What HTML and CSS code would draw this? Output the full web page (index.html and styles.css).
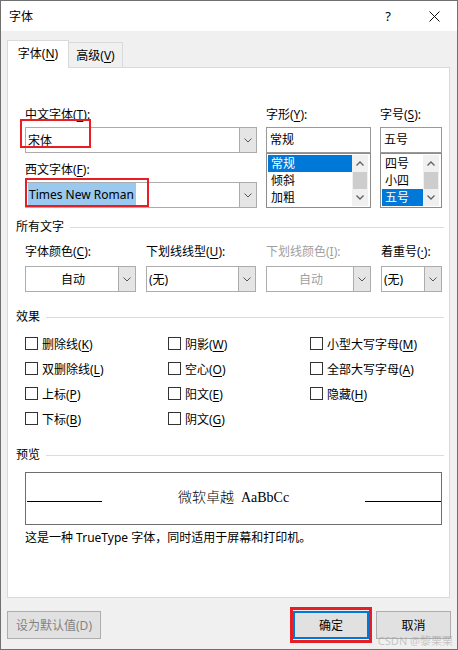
FILE: index.html
```html
<!DOCTYPE html>
<html lang="zh-CN">
<head>
  <meta charset="UTF-8" />
  <meta name="viewport" content="width=device-width, initial-scale=1" />
  <title>字体</title>
  <link rel="stylesheet" href="styles.css">
</head>
<body>
  <div class="dialog">
    <div class="titlebar">
      <span class="title">字体</span>
      <span class="tb-btn help">?</span>
      <span class="tb-btn close">
        <svg width="11" height="11" viewBox="0 0 11 11"><path d="M0.5 0.5L10.5 10.5M10.5 0.5L0.5 10.5" stroke="#111" stroke-width="1" fill="none"/></svg>
      </span>
    </div>

    <div class="dialog-body">
      <div class="tabs">
        <div class="tab active">字体(<u>N</u>)</div>
        <div class="tab">高级(<u>V</u>)</div>
      </div>

      <div class="panel">
        <!-- font / style / size -->
        <div class="font-grid">
          <div class="col">
            <label>中文字体(<u>T</u>):</label>
            <div class="combo gap-top">
              <div class="combo-text">宋体</div>
              <div class="combo-btn"><svg width="8" height="5" viewBox="0 0 8 5"><path d="M0.5 0.5L4 4L7.5 0.5" fill="none" stroke="#555"/></svg></div>
              <div class="mark mark-cn"></div>
            </div>
            <label class="second">西文字体(<u>F</u>):</label>
            <div class="combo gap-top">
              <div class="combo-text"><span class="hl">Times New Roman</span></div>
              <div class="combo-btn"><svg width="8" height="5" viewBox="0 0 8 5"><path d="M0.5 0.5L4 4L7.5 0.5" fill="none" stroke="#555"/></svg></div>
              <div class="mark mark-west"></div>
            </div>
          </div>

          <div class="col">
            <label>字形(<u>Y</u>):</label>
            <div class="textbox gap-top">常规</div>
            <div class="listbox">
              <div class="items">
                <div class="item sel">常规</div>
                <div class="item">倾斜</div>
                <div class="item">加粗</div>
              </div>
              <div class="vscroll">
                <div class="arrow"><svg width="8" height="5" viewBox="0 0 8 5"><path d="M0.5 4.5L4 1L7.5 4.5" fill="none" stroke="#606060" stroke-width="1.3"/></svg></div>
                <div class="thumb"></div>
                <div class="arrow"><svg width="8" height="5" viewBox="0 0 8 5"><path d="M0.5 0.5L4 4L7.5 0.5" fill="none" stroke="#606060" stroke-width="1.3"/></svg></div>
              </div>
            </div>
          </div>

          <div class="col">
            <label>字号(<u>S</u>):</label>
            <div class="textbox gap-top">五号</div>
            <div class="listbox">
              <div class="items">
                <div class="item">四号</div>
                <div class="item">小四</div>
                <div class="item sel">五号</div>
              </div>
              <div class="vscroll">
                <div class="arrow"><svg width="8" height="5" viewBox="0 0 8 5"><path d="M0.5 4.5L4 1L7.5 4.5" fill="none" stroke="#606060" stroke-width="1.3"/></svg></div>
                <div class="thumb"></div>
                <div class="arrow"><svg width="8" height="5" viewBox="0 0 8 5"><path d="M0.5 0.5L4 4L7.5 0.5" fill="none" stroke="#606060" stroke-width="1.3"/></svg></div>
              </div>
            </div>
          </div>
        </div>

        <!-- all text -->
        <div class="group-title sec-all">所有文字</div>
        <div class="attr-grid">
          <label>字体颜色(<u>C</u>):</label>
          <label>下划线线型(<u>U</u>):</label>
          <label class="disabled">下划线颜色(<u>I</u>):</label>
          <label>着重号(<u>·</u>):</label>

          <div class="combo">
            <div class="combo-text center">自动</div>
            <div class="combo-btn"><svg width="8" height="5" viewBox="0 0 8 5"><path d="M0.5 0.5L4 4L7.5 0.5" fill="none" stroke="#555"/></svg></div>
          </div>
          <div class="combo">
            <div class="combo-text">(无)</div>
            <div class="combo-btn"><svg width="8" height="5" viewBox="0 0 8 5"><path d="M0.5 0.5L4 4L7.5 0.5" fill="none" stroke="#555"/></svg></div>
          </div>
          <div class="combo disabled">
            <div class="combo-text center">自动</div>
            <div class="combo-btn"><svg width="8" height="5" viewBox="0 0 8 5"><path d="M0.5 0.5L4 4L7.5 0.5" fill="none" stroke="#555"/></svg></div>
          </div>
          <div class="combo">
            <div class="combo-text">(无)</div>
            <div class="combo-btn"><svg width="8" height="5" viewBox="0 0 8 5"><path d="M0.5 0.5L4 4L7.5 0.5" fill="none" stroke="#555"/></svg></div>
          </div>
        </div>

        <!-- effects -->
        <div class="group-title sec-fx">效果</div>
        <div class="fx-grid">
          <div class="check"><span class="box"></span><span>删除线(<u>K</u>)</span></div>
          <div class="check"><span class="box"></span><span>双删除线(<u>L</u>)</span></div>
          <div class="check"><span class="box"></span><span>上标(<u>P</u>)</span></div>
          <div class="check"><span class="box"></span><span>下标(<u>B</u>)</span></div>
          <div class="check"><span class="box"></span><span>阴影(<u>W</u>)</span></div>
          <div class="check"><span class="box"></span><span>空心(<u>O</u>)</span></div>
          <div class="check"><span class="box"></span><span>阳文(<u>E</u>)</span></div>
          <div class="check"><span class="box"></span><span>阴文(<u>G</u>)</span></div>
          <div class="check"><span class="box"></span><span>小型大写字母(<u>M</u>)</span></div>
          <div class="check"><span class="box"></span><span>全部大写字母(<u>A</u>)</span></div>
          <div class="check"><span class="box"></span><span>隐藏(<u>H</u>)</span></div>
        </div>

        <!-- preview -->
        <div class="group-title sec-preview">预览</div>
        <div class="preview">
          <div class="pline"></div>
          <div class="ptext">微软卓越&nbsp;&nbsp;AaBbCc</div>
          <div class="pline right"></div>
        </div>
        <div class="desc">这是一种 TrueType 字体，同时适用于屏幕和打印机。</div>
      </div>

      <div class="buttons">
        <div class="btn btn-default">设为默认值(D)</div>
        <div class="spacer"></div>
        <div class="btn btn-ok">确定<div class="mark mark-ok"></div></div>
        <div class="btn btn-cancel">取消</div>
      </div>
    </div>

    <div class="watermark">CSDN @黎栗栗</div>
  </div>
</body>
</html>
```

FILE: styles.css
```css
* {
  box-sizing: border-box;
}
html, body {
  margin: 0;
  padding: 0;
}
body {
  font-family: "Noto Sans", "Noto Sans CJK SC", sans-serif;
  font-size: 12px;
  color: #000;
  width: 458px;
  height: 650px;
}
u {
  text-decoration-thickness: 1px;
  text-underline-offset: 2px;
}
.dialog {
  width: 458px;
  height: 650px;
  border: 1px solid #707070;
  background-color: #f0f0f0;
  display: flex;
  flex-direction: column;
  position: relative;
}
.titlebar {
  height: 30px;
  flex-shrink: 0;
  background-color: #fff;
  display: flex;
  align-items: center;
}
.title {
  flex: 1;
  padding-left: 8px;
}
.tb-btn {
  width: 46px;
  height: 30px;
  display: flex;
  align-items: center;
  justify-content: center;
}
.help {
  font-size: 13px;
}
.dialog-body {
  flex: 1;
  padding: 9px 6px 0 6px;
  display: flex;
  flex-direction: column;
}

/* tabs */
.tabs {
  display: flex;
  align-items: flex-end;
  height: 27px;
}
.tab {
  height: 25px;
  width: 55px;
  margin-left: -1px;
  padding-top: 5px;
  line-height: 16px;
  text-align: center;
  border: 1px solid #d9d9d9;
  border-bottom: none;
  background-color: #f0f0f0;
}
.tab.active {
  width: 62px;
  height: 28px;
  margin-left: 0;
  margin-bottom: -1px;
  background-color: #fff;
  position: relative;
  z-index: 1;
}
.panel {
  height: 531px;
  flex-shrink: 0;
  margin-right: 1px;
  background-color: #fff;
  border: 1px solid #d9d9d9;
  padding: 39px 5px 0 8px;
}

label {
  display: block;
  height: 16px;
  line-height: 16px;
  white-space: nowrap;
}
label.disabled {
  color: #a0a0a0;
}

/* font / style / size */
.font-grid {
  display: grid;
  grid-template-columns: 232px 105px 62px;
  column-gap: 9px;
  margin-left: 9px;
}
.gap-top {
  margin-top: 4px;
}
label.second {
  margin-top: 9px;
}
.combo {
  height: 26px;
  display: flex;
  border: 1px solid #acacac;
  background-color: #fff;
  position: relative;
}
.combo-text {
  flex: 1;
  padding-left: 2px;
  display: flex;
  align-items: center;
  white-space: nowrap;
}
.combo-text.center {
  justify-content: center;
}
.combo.disabled .combo-text {
  color: #a0a0a0;
}
.combo-btn {
  width: 17px;
  background-color: #e5e5e5;
  border-left: 1px solid #acacac;
  display: flex;
  align-items: center;
  justify-content: center;
}
.hl {
  background-color: #99c9ef;
  padding: 3px 2px 4px 1px;
}
.textbox {
  height: 26px;
  border: 1px solid #999;
  padding-left: 3px;
  line-height: 23px;
}
.listbox {
  height: 55px;
  border: 1px solid #8c8c8c;
  padding: 1px 2px 1px 1px;
  display: flex;
}
.items {
  flex: 1;
}
.item {
  height: 17px;
  line-height: 17px;
  padding-left: 3px;
}
.item.sel {
  background-color: #0078d7;
  color: #fff;
}
.vscroll {
  width: 16px;
  background-color: #f0f0f0;
  display: flex;
  flex-direction: column;
}
.vscroll .arrow {
  height: 17px;
  display: flex;
  align-items: center;
  justify-content: center;
}
.vscroll .thumb {
  height: 17px;
  margin: 0 1px;
  background-color: #cdcdcd;
}

/* group headers */
.group-title {
  display: flex;
  align-items: center;
  height: 16px;
  line-height: 16px;
}
.group-title::after {
  content: "";
  flex: 1;
  height: 1px;
  margin-left: 6px;
  background-color: #dcdcdc;
}
.sec-all {
  margin-top: 11px;
}
.attr-grid {
  display: grid;
  grid-template-columns: 111px 110px 105px 61px;
  column-gap: 10px;
  row-gap: 6px;
  margin: 9px 0 0 9px;
}

/* effects */
.sec-fx {
  margin-top: 17px;
}
.fx-grid {
  display: grid;
  grid-template-columns: 143px 142px 1fr;
  grid-template-rows: repeat(4, 25px);
  grid-auto-flow: column;
  margin: 6px 0 0 9px;
}
.check {
  display: flex;
  align-items: center;
  gap: 4px;
  white-space: nowrap;
}
.box {
  width: 13px;
  height: 13px;
  border: 1px solid #333;
  background-color: #fff;
}

/* preview */
.sec-preview {
  margin-top: 16px;
}
.preview {
  width: 417px;
  height: 53px;
  margin: 9px 0 0 9px;
  border: 1px solid #6e6e6e;
  padding: 16px 0 0 1px;
  display: flex;
  align-items: baseline;
}
.pline {
  width: 75px;
  height: 1px;
  background-color: #000;
}
.pline.right {
  width: 76px;
}
.ptext {
  flex: 1;
  text-align: center;
  font-family: "Liberation Serif", "Noto Sans CJK SC", serif;
  font-size: 14px;
  font-weight: 300;
  line-height: 18px;
  white-space: nowrap;
}
.desc {
  margin: 5px 0 0 9px;
  line-height: 16px;
}

/* buttons */
.buttons {
  display: flex;
  align-items: flex-start;
  margin-top: 13px;
}
.spacer {
  flex: 1;
}
.btn {
  height: 28px;
  border: 1px solid #adadad;
  background-color: #e1e1e1;
  display: flex;
  align-items: center;
  justify-content: center;
  position: relative;
}
.btn-default {
  width: 94px;
  color: #838383;
}
.btn-ok {
  width: 76px;
  border: 2px solid #0078d7;
}
.btn-cancel {
  width: 75px;
  margin-left: 7px;
}

/* red annotation boxes drawn over the screenshot */
.mark {
  position: absolute;
  border: 2px solid #e81e25;
  pointer-events: none;
}
.mark-cn {
  left: -6px;
  top: -9px;
  width: 71px;
  height: 29px;
}
.mark-west {
  left: -1px;
  top: -5px;
  width: 124px;
  height: 29px;
}
.mark-ok {
  left: -5px;
  top: -6px;
  right: -5px;
  bottom: -6px;
  border-width: 3px;
}
.watermark {
  position: absolute;
  right: 4px;
  bottom: 1px;
  font-size: 11px;
  line-height: 14px;
  color: rgba(160, 160, 160, 0.55);
}
```
